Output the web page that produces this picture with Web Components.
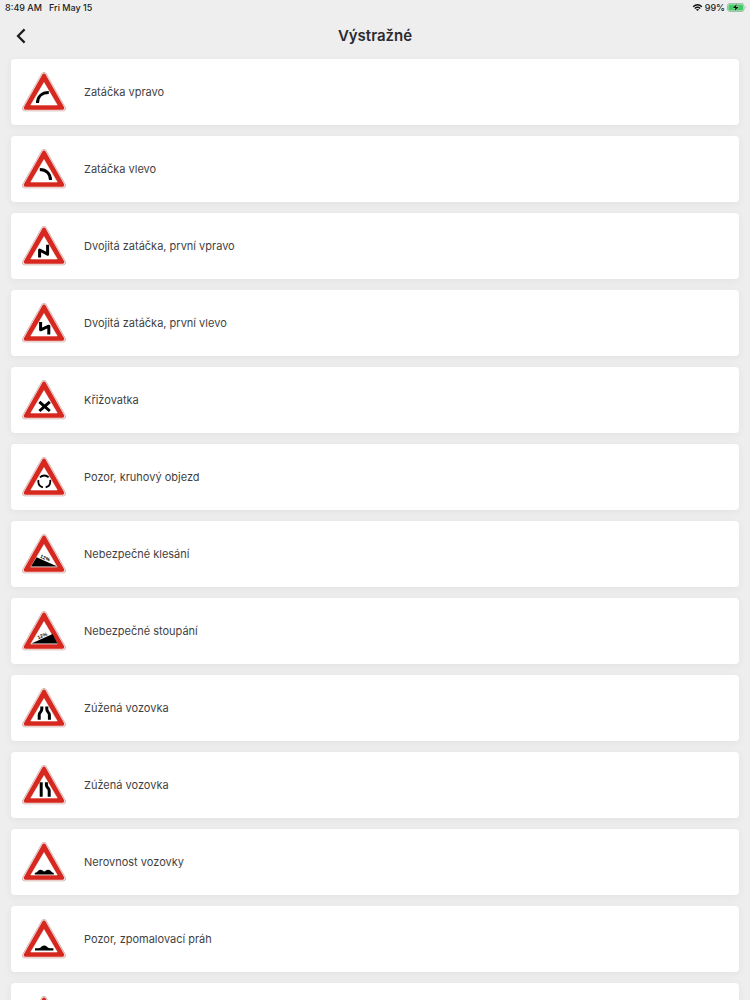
<!DOCTYPE html>
<html lang="cs">
<head>
<meta charset="utf-8">
<meta name="viewport" content="width=device-width, initial-scale=1">
<title>Výstražné</title>
<style>
    body {
        margin: 0;
        background: #eeeeef;
        color: #2b2b31;
        font-family: Inter, 'Liberation Sans', sans-serif;
    }
</style>
</head>
<body>
<sign-app>
    <status-bar time="8:49 AM" date="Fri May 15" battery="99%"></status-bar>
    <nav-bar>Výstražné</nav-bar>
    <sign-list>
        <sign-row sign="right">Zatáčka vpravo</sign-row>
        <sign-row sign="left">Zatáčka vlevo</sign-row>
        <sign-row sign="double-right">Dvojitá zatáčka, první vpravo</sign-row>
        <sign-row sign="double-left">Dvojitá zatáčka, první vlevo</sign-row>
        <sign-row sign="crossroad">Křižovatka</sign-row>
        <sign-row sign="roundabout">Pozor, kruhový objezd</sign-row>
        <sign-row sign="descent">Nebezpečné klesání</sign-row>
        <sign-row sign="ascent">Nebezpečné stoupání</sign-row>
        <sign-row sign="narrow-both">Zúžená vozovka</sign-row>
        <sign-row sign="narrow-right">Zúžená vozovka</sign-row>
        <sign-row sign="bumps">Nerovnost vozovky</sign-row>
        <sign-row sign="hump">Pozor, zpomalovací práh</sign-row>
        <sign-row></sign-row>
    </sign-list>
</sign-app>

<script>
// pictograms, drawn inside the 44x40 warning triangle
const PICTOGRAMS = {
    'right': '<path class="line" d="M15.5 31C15.5 25 19.5 20.5 26.8 20.5"/>',
    'left': '<path class="line" d="M17.8 20.5C24.5 20.5 28.5 25 28.5 31"/>',
    'double-right': '<path class="line" d="M17.6 31.4V24L25.6 28.2V18.8"/>',
    'double-left': '<path class="line" d="M18.6 19V26.8L26.8 23.2V31.4"/>',
    'crossroad': '<path class="line" d="M17.4 21.8L27.8 31M27.8 21.8L17.4 31"/>',
    'roundabout': '<circle class="ring" cx="22.3" cy="24.5" r="6" pathLength="90" stroke-dasharray="23 7" stroke-dashoffset="4"/>',
    'descent': '<path d="M9 32.4L14.6 23.2L35.4 32.4Z"/><text x="23" y="25.6" transform="rotate(22 23 24)">12%</text>',
    'ascent': '<path d="M9.4 32.6L30.6 23L35.4 32.6Z"/><text x="20.4" y="26.4" transform="rotate(-22 20.4 25)">12%</text>',
    'narrow-both': '<path class="line" d="M17.2 31.8V27Q17.2 25.4 18.4 24.2Q19.8 22.8 19.8 21V18.6M27.4 31.8V27Q27.4 25.4 26.2 24.2Q24.8 22.8 24.8 21V18.6"/>',
    'narrow-right': '<path class="line" d="M19.2 31.8V17.2M27.2 31.8V25.8Q27.2 24.2 26 23Q24.4 21.6 24.4 20V17.2"/>',
    'bumps': '<path d="M12.8 32.6V31Q15 30.6 16 29Q18.4 26.4 21 28.8Q22.3 30 23.6 28.8Q26.2 26.4 28.8 29Q29.8 30.6 31.8 31V32.6Z"/>',
    'hump': '<path d="M13 31.6V29.2H16.4Q18.6 28.8 19.6 27.4Q22.2 25.8 24.8 27.4Q25.8 28.8 28 29.2H31.4V31.6Z"/>'
}

class SignApp extends HTMLElement {
    constructor() {
        super()
        this.shadow = this.attachShadow({ mode: 'open' })
        this.shadow.innerHTML = /*html*/ `
            <style>
                :host {
                    display: flex;
                    flex-direction: column;
                    height: 100vh;
                }
            </style>
            <slot></slot>
        `
    }
}

class StatusBar extends HTMLElement {
    constructor() {
        super()
        this.shadow = this.attachShadow({ mode: 'open' })
        this.render()
    }

    render() {
        this.shadow.innerHTML = /*html*/ `
            <style>
                :host {
                    display: flex;
                    align-items: center;
                    gap: 7px;
                    height: 15px;
                    padding: 0 4px 0 5px;
                    font-size: 9px;
                    line-height: 15px;
                    font-weight: 500;
                    color: #1c1c1e;
                }
                .right {
                    display: flex;
                    align-items: center;
                    gap: 2px;
                    margin-left: auto;
                }
                svg {
                    display: block;
                }
            </style>
            <span>${this.getAttribute('time')}</span>
            <span>${this.getAttribute('date')}</span>
            <div class="right">
                <svg width="11" height="9" viewBox="0 0 12 9" fill="none" stroke="#111" stroke-width="1.6">
                    <path d="M1.2 3.6Q6 -.7 10.8 3.6M3 5.6Q6 3 9 5.6"/>
                    <path d="M6 8.4L4.3 6.7Q6 5.4 7.7 6.7Z" fill="#111" stroke="none"/>
                </svg>
                <span>${this.getAttribute('battery')}</span>
                <svg width="19" height="9" viewBox="0 0 19 9">
                    <rect x=".5" y=".5" width="16.5" height="8" rx="2.2" fill="#c9ecd1" stroke="#a6bdaa"/>
                    <rect x="1.5" y="1.5" width="14.5" height="6" rx="1.2" fill="#43cc66"/>
                    <path d="M18 3Q19 4.5 18 6Z" fill="#999"/>
                    <path d="M9.8 1L5.8 5H8.4L7.6 8L11.6 4H9Z" fill="#111" stroke="#c9ecd1" stroke-width=".6" paint-order="stroke"/>
                </svg>
            </div>
        `
    }
}

class NavBar extends HTMLElement {
    constructor() {
        super()
        this.shadow = this.attachShadow({ mode: 'open' })
        this.shadow.innerHTML = /*html*/ `
            <style>
                :host {
                    display: grid;
                    grid-template-columns: 42px 1fr 42px;
                    align-items: center;
                    height: 42px;
                }
                button {
                    display: flex;
                    align-items: center;
                    justify-content: center;
                    height: 42px;
                    padding: 0;
                    border: 0;
                    background: none;
                    color: #1c1c1e;
                    cursor: pointer;
                }
                h1 {
                    margin: 0;
                    font-size: 15px;
                    line-height: 24px;
                    font-weight: 600;
                    text-align: center;
                }
            </style>
            <button type="button" aria-label="Zpět">
                <svg width="10" height="16" viewBox="0 0 10 16" fill="none" stroke="currentColor" stroke-width="2.2">
                    <path d="M8.6 1.4L2 8L8.6 14.6"/>
                </svg>
            </button>
            <h1><slot></slot></h1>
        `
    }
}

class SignList extends HTMLElement {
    constructor() {
        super()
        this.shadow = this.attachShadow({ mode: 'open' })
        this.shadow.innerHTML = /*html*/ `
            <style>
                :host {
                    display: flex;
                    flex: 1;
                    flex-direction: column;
                    gap: 11px;
                    min-height: 0;
                    padding: 2px 11px 0;
                    overflow-y: auto;
                    scrollbar-width: none;
                }
            </style>
            <slot></slot>
        `
    }
}

class SignRow extends HTMLElement {
    constructor() {
        super()
        this.shadow = this.attachShadow({ mode: 'open' })
        this.render()
    }

    render() {
        this.shadow.innerHTML = /*html*/ `
            <style>
                :host {
                    display: block;
                    flex: none;
                }
                a {
                    display: flex;
                    align-items: center;
                    gap: 18px;
                    height: 66px;
                    box-sizing: border-box;
                    padding: 0 11px;
                    border-radius: 4px;
                    background: #fff;
                    box-shadow: 0 2px 8px rgba(40, 45, 50, 0.06);
                    color: #3f3f43;
                    font-size: 11px;
                    line-height: 16px;
                    text-decoration: none;
                }
                svg {
                    display: block;
                    flex: none;
                }
                .line {
                    fill: none;
                    stroke: #000;
                    stroke-width: 3;
                    stroke-linejoin: round;
                }
                .ring {
                    fill: none;
                    stroke: #000;
                    stroke-width: 1.8;
                }
                text {
                    font: 700 5px 'Liberation Sans', sans-serif;
                    text-anchor: middle;
                }
            </style>
            <a href="#">
                <svg width="44" height="40" viewBox="0 0 44 40" aria-hidden="true">
                    <path d="M22 3L41 36.5H3Z" fill="#c3a09e" stroke="#c3a09e" stroke-width="5.6" stroke-linejoin="round"/>
                    <path d="M22 3L41 36.5H3Z" fill="#f8dedd" stroke="#f8dedd" stroke-width="4.6" stroke-linejoin="round"/>
                    <path d="M22 3.4L40.4 36H3.6Z" fill="#d6281f" stroke="#d6281f" stroke-width="3.6" stroke-linejoin="round"/>
                    <path d="M22 10.6L35.2 33H8.8Z" fill="#fff" stroke="#fff" stroke-width=".6" stroke-linejoin="round"/>
                    ${PICTOGRAMS[this.getAttribute('sign')] || ''}
                </svg>
                <span><slot></slot></span>
            </a>
        `
    }
}

customElements.define('sign-app', SignApp)
customElements.define('status-bar', StatusBar)
customElements.define('nav-bar', NavBar)
customElements.define('sign-list', SignList)
customElements.define('sign-row', SignRow)
</script>
</body>
</html>
